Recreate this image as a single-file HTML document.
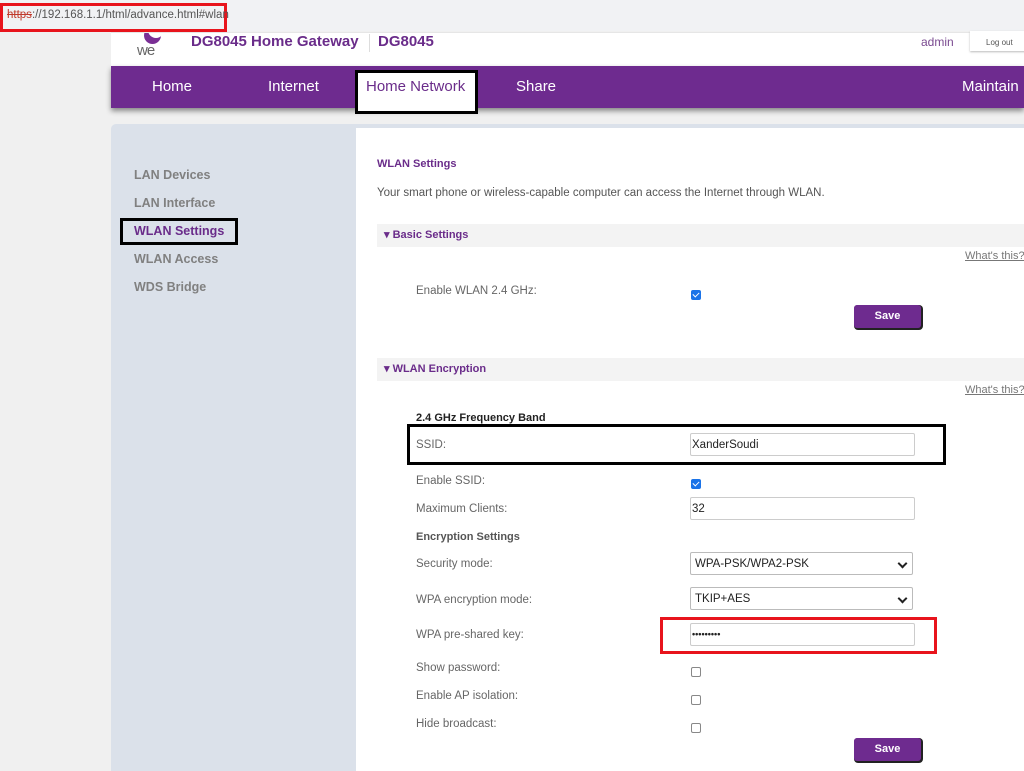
<!DOCTYPE html>
<html><head><meta charset="utf-8"><style>
*{margin:0;padding:0;box-sizing:border-box}
body{width:1024px;height:771px;overflow:hidden;background:#f0f0f0;font-family:"Liberation Sans",Arial,sans-serif;position:relative}
.a{position:absolute;white-space:nowrap}
.lbl{position:absolute;left:416px;font-size:11.5px;color:#666;white-space:nowrap}
.inp{position:absolute;left:690px;width:225px;height:23px;border:1px solid #ccc;border-radius:2px;background:#fff;font-size:11.5px;color:#222;padding:5px 0 0 1px}
.sel{position:absolute;left:690px;width:223px;height:23px;border:1px solid #bbb;border-radius:2px;background:#fff;font-size:11.5px;color:#222;padding:5px 0 0 4px}
.sel:after{content:"";position:absolute;right:6px;top:7px;width:5px;height:5px;border-right:2px solid #222;border-bottom:2px solid #222;transform:rotate(45deg)}
.cb{position:absolute;left:691px;width:10px;height:10px;border:1px solid #888;border-radius:2px;background:#fff}
.cbk{position:absolute;left:691px;width:10px;height:10px;border-radius:2px;background:#1a73e8}
.cbk:after{content:"";position:absolute;left:3px;top:1px;width:3px;height:5px;border-right:1.6px solid #fff;border-bottom:1.6px solid #fff;transform:rotate(45deg)}
.btn{position:absolute;left:854px;width:67px;height:23px;background:#6e2b8f;border-radius:3px;box-shadow:1px 1px 0 1px #222;color:#fff;font-weight:bold;font-size:11px;text-align:center;line-height:23px}
.sec{position:absolute;left:377px;width:647px;height:23px;background:#f3f3f3;color:#6a2c8a;font-weight:bold;font-size:11px;line-height:23px;padding-left:7px;white-space:nowrap}
.wt{position:absolute;left:965px;font-size:11px;color:#777;text-decoration:underline;white-space:nowrap}
.side{position:absolute;left:134px;font-size:12.5px;font-weight:bold;color:#808080;white-space:nowrap}
.nav{position:absolute;top:78px;color:#fff;font-size:15px;white-space:nowrap}
</style></head><body>
<div class="a" style="left:0;top:0;width:1024px;height:31px;background:#f1f2f4"></div>
<div class="a" style="left:0;top:3px;width:227px;height:29px;border:3px solid #e8141c"></div>
<div class="a" style="left:7px;top:9px;font-size:11.5px;color:#555"><span style="color:#c0392b;text-decoration:line-through">https</span>://192.168.1.1/html/advance.html#wlan</div>
<div class="a" style="left:111px;top:32px;width:913px;height:34px;background:#fff;border-top:1px solid #e6e6e6"></div>
<div class="a" style="left:130px;top:33px;width:40px;height:14px;overflow:hidden">
<div style="position:absolute;left:14px;top:-6px;width:17px;height:17px;border-radius:50%;background:#7a2f95"></div>
<div style="position:absolute;left:18px;top:-11px;width:16px;height:16px;border-radius:50%;background:#fff"></div>
</div>
<div class="a" style="left:137px;top:42px;font-size:15px;color:#666;letter-spacing:-1px">we</div>
<div class="a" style="left:191px;top:33px;font-size:15px;font-weight:bold;color:#6a2c8a">DG8045 Home Gateway</div>
<div class="a" style="left:369px;top:34px;width:1px;height:18px;background:#ddd"></div>
<div class="a" style="left:378px;top:33px;font-size:15px;font-weight:bold;color:#6a2c8a">DG8045</div>
<div class="a" style="left:921px;top:35px;font-size:12px;color:#7a4a90">admin</div>
<div class="a" style="left:970px;top:31px;width:60px;height:20px;background:#fff;box-shadow:0 1px 2px #bbb;font-size:8px;color:#555;padding:7px 0 0 16px">Log out</div>
<div class="a" style="left:111px;top:66px;width:913px;height:42px;background:#6e2b8f;box-shadow:0 3px 5px #888"></div>
<div class="nav" style="left:152px">Home</div>
<div class="nav" style="left:268px">Internet</div>
<div class="a" style="left:355px;top:70px;width:123px;height:44px;background:#fff;border:3px solid #000"></div>
<div class="nav" style="left:366px;color:#6a2c8a">Home Network</div>
<div class="nav" style="left:516px">Share</div>
<div class="nav" style="left:962px">Maintain</div>
<div class="a" style="left:111px;top:124px;width:913px;height:647px;background:#dbe1ea;border-radius:5px 0 0 0"></div>
<div class="a" style="left:356px;top:128px;width:668px;height:643px;background:#fff"></div>
<div class="side" style="top:168px">LAN Devices</div>
<div class="side" style="top:196px">LAN Interface</div>
<div class="a" style="left:120px;top:218px;width:118px;height:27px;border:3px solid #000"></div>
<div class="side" style="top:224px;color:#6a2c8a">WLAN Settings</div>
<div class="side" style="top:252px">WLAN Access</div>
<div class="side" style="top:280px">WDS Bridge</div>
<div class="a" style="left:377px;top:158px;font-size:11px;font-weight:bold;color:#6a2c8a">WLAN Settings</div>
<div class="a" style="left:377px;top:187px;font-size:11.5px;color:#555">Your smart phone or wireless-capable computer can access the Internet through WLAN.</div>
<div class="sec" style="top:224px">&#9662; Basic Settings</div>
<div class="wt" style="top:250px">What's this?</div>
<div class="lbl" style="top:285px">Enable WLAN 2.4 GHz:</div>
<div class="cbk" style="top:290px"></div>
<div class="btn" style="top:305px">Save</div>
<div class="sec" style="top:358px">&#9662; WLAN Encryption</div>
<div class="wt" style="top:384px">What's this?</div>
<div class="lbl" style="top:412px;font-weight:bold;color:#222;font-size:11px">2.4 GHz Frequency Band</div>
<div class="a" style="left:407px;top:424px;width:539px;height:41px;border:3px solid #000"></div>
<div class="lbl" style="top:439px">SSID:</div>
<div class="inp" style="top:433px">XanderSoudi</div>
<div class="lbl" style="top:475px">Enable SSID:</div>
<div class="cbk" style="top:479px"></div>
<div class="lbl" style="top:503px">Maximum Clients:</div>
<div class="inp" style="top:497px">32</div>
<div class="lbl" style="top:531px;font-weight:bold;color:#555;font-size:11px">Encryption Settings</div>
<div class="lbl" style="top:558px">Security mode:</div>
<div class="sel" style="top:552px">WPA-PSK/WPA2-PSK</div>
<div class="lbl" style="top:594px">WPA encryption mode:</div>
<div class="sel" style="top:587px">TKIP+AES</div>
<div class="a" style="left:660px;top:617px;width:277px;height:37px;border:3px solid #e8141c"></div>
<div class="lbl" style="top:629px">WPA pre-shared key:</div>
<div class="inp" style="top:623px;font-size:9px;font-weight:bold;padding-top:5px">&bull;&bull;&bull;&bull;&bull;&bull;&bull;&bull;&bull;</div>
<div class="lbl" style="top:662px">Show password:</div>
<div class="cb" style="top:667px"></div>
<div class="lbl" style="top:690px">Enable AP isolation:</div>
<div class="cb" style="top:695px"></div>
<div class="lbl" style="top:718px">Hide broadcast:</div>
<div class="cb" style="top:723px"></div>
<div class="btn" style="top:738px">Save</div>
</body></html>
